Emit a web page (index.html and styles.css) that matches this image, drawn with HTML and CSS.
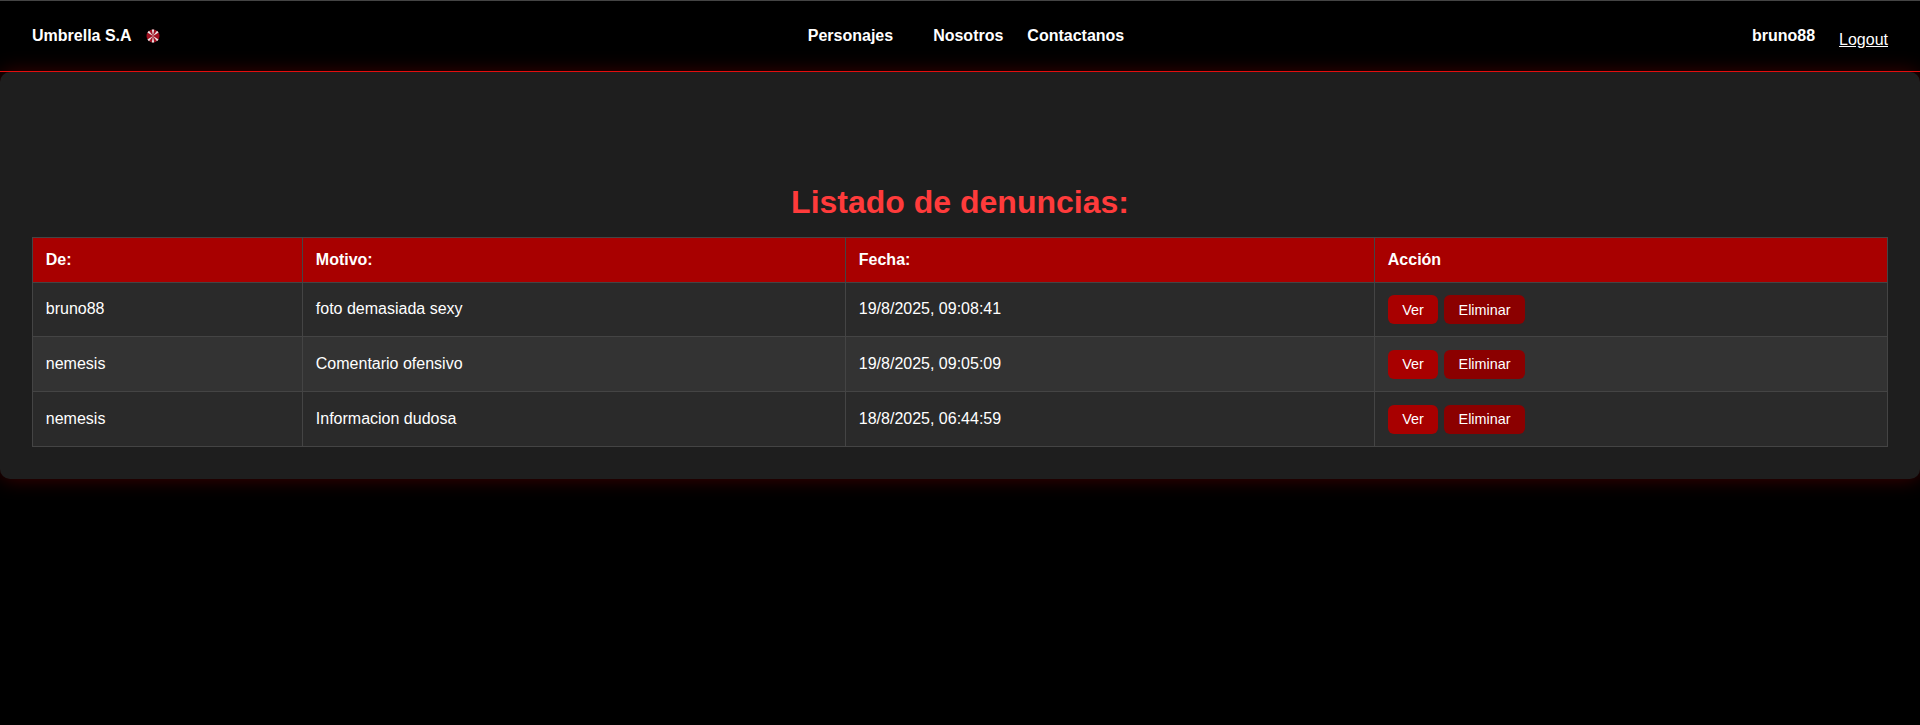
FILE: index.html
```html
<!DOCTYPE html>
<html lang="es">
<head>
    <meta charset="UTF-8">
    <meta name="viewport" content="width=device-width, initial-scale=1.0">
    <title>Umbrella S.A</title>
    <link rel="stylesheet" href="styles.css">
</head>
<body>
    <nav class="navbar">
        <div class="brand">
            <span>Umbrella S.A</span>
            <svg class="logo" viewBox="0 0 14 14" width="14" height="14" aria-hidden="true">
                <circle cx="7" cy="7" r="6.5" fill="#a01020"/>
                <path fill="#e8e4e4" d="M7 7L5.8 .6H8.2ZM7 7L5.8 13.4H8.2ZM7 7L1.4 3.6L3 1.7ZM7 7L12.6 3.6L11 1.7ZM7 7L1.4 10.4L3 12.3ZM7 7L12.6 10.4L11 12.3Z"/>
            </svg>
        </div>
        <ul class="menu">
            <li class="menu-first"><a href="#">Personajes</a></li>
            <li class="menu-second"><a href="#">Nosotros</a></li>
            <li><a href="#">Contactanos</a></li>
        </ul>
        <div class="user">
            <span class="username">bruno88</span>
            <a class="logout" href="#">Logout</a>
        </div>
    </nav>

    <main class="panel">
        <h1 class="title">Listado de denuncias:</h1>
        <table class="list">
            <colgroup>
                <col class="col-de">
                <col class="col-motivo">
                <col class="col-fecha">
                <col>
            </colgroup>
            <thead>
                <tr>
                    <th>De:</th>
                    <th>Motivo:</th>
                    <th>Fecha:</th>
                    <th>Acción</th>
                </tr>
            </thead>
            <tbody>
                <tr>
                    <td>bruno88</td>
                    <td>foto demasiada sexy</td>
                    <td>19/8/2025, 09:08:41</td>
                    <td><button class="btn btn-ver">Ver</button><button class="btn btn-del">Eliminar</button></td>
                </tr>
                <tr>
                    <td>nemesis</td>
                    <td>Comentario ofensivo</td>
                    <td>19/8/2025, 09:05:09</td>
                    <td><button class="btn btn-ver">Ver</button><button class="btn btn-del">Eliminar</button></td>
                </tr>
                <tr>
                    <td>nemesis</td>
                    <td>Informacion dudosa</td>
                    <td>18/8/2025, 06:44:59</td>
                    <td><button class="btn btn-ver">Ver</button><button class="btn btn-del">Eliminar</button></td>
                </tr>
            </tbody>
        </table>
    </main>
</body>
</html>
```

FILE: styles.css
```css
*{margin: 0;padding: 0;box-sizing: border-box;}
ul{list-style: none;}

body{background: #000;color: #fff;font-family: "Liberation Sans", Arial, sans-serif;font-size: 16px;height: 725px;overflow: hidden;}

.navbar{height: 72px;border-top: 1px solid #444;border-bottom: 1px solid #e01010;background: #000;display: flex;align-items: center;justify-content: space-between;padding: 0 32px;}
.brand{display: flex;align-items: center;gap: 14px;font-weight: bold;width: 300px;}
.logo{display: block;}
.menu{display: flex;font-weight: bold;margin-left: 12px;}
.menu a{color: #fff;text-decoration: none;}
.menu-first{margin-right: 40px;}
.menu-second{margin-right: 24px;}
.user{display: flex;justify-content: flex-end;align-items: center;gap: 24px;width: 300px;}
.username{font-weight: bold;}
.logout{color: #fff;margin-top: 8px;}

.panel{position: relative;height: 407px;background: #1e1e1e;border-radius: 10px;box-shadow: 0 0 20px rgba(255,0,0,.25);padding: 112px 32px 0;}
.title{color: #ff3b3b;font-size: 32px;line-height: 37px;text-align: center;margin-bottom: 16px;}

.list{width: 100%;border-collapse: collapse;table-layout: fixed;}
.col-de{width: 270px;}
.col-motivo{width: 543px;}
.col-fecha{width: 529px;}
.list th,.list td{border: 1px solid #444;padding: 0 12.8px;text-align: left;}
.list th{background: #a80000;height: 45px;font-weight: bold;}
.list td{height: 55px;}
.list tbody tr:first-child td{height: 54px;}
.list tbody tr:first-child td:not(:last-child){padding-bottom: 2px;}
.list tbody tr:nth-child(odd){background: #2a2a2a;}
.list tbody tr:nth-child(even){background: #333;}

.btn{border: none;color: #fff;font-family: inherit;font-size: 14.4px;height: 29px;border-radius: 6px;padding: 0 14.4px;vertical-align: middle;}
.btn-ver{background: #a80000;margin-right: 6px;}
.btn-del{background: #8b0000;}
```
